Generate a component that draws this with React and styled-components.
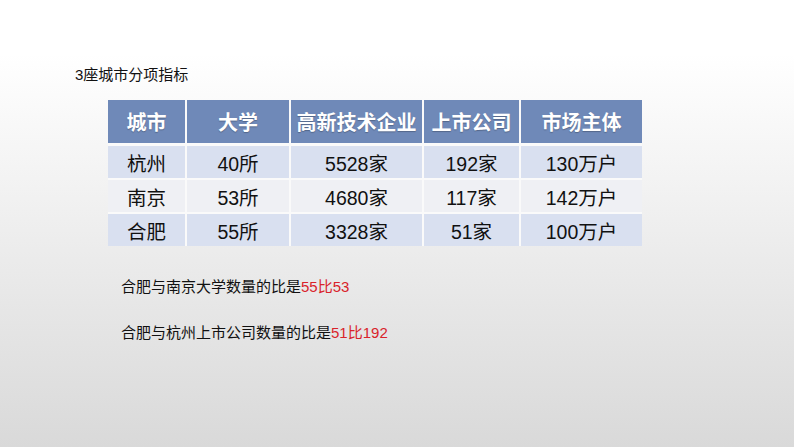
import React from "react";
import styled, { createGlobalStyle } from "styled-components";

const GlobalStyle = createGlobalStyle`
  html, body {
    margin: 0;
    padding: 0;
  }
  body {
    font-family: "Liberation Sans", "Noto Sans CJK SC", sans-serif;
  }
`;

const Slide = styled.div`
  width: 794px;
  height: 447px;
  box-sizing: border-box;
  padding: 66px 0 0 75px;
  background: linear-gradient(180deg, #ffffff 0%, #ffffff 12%, #d9d9d9 100%);
  color: #111;
`;

const Title = styled.div`
  font-size: 15px;
  line-height: 18px;
`;

const Table = styled.div`
  display: grid;
  grid-template-columns: 77px 102px 131px 95px 121px;
  grid-template-rows: 44px 32px 32px 32px;
  column-gap: 2px;
  row-gap: 2px;
  width: 534px;
  margin: 16px 0 0 33px;
  background: #fafafa;
`;

const HeadCell = styled.div`
  display: flex;
  align-items: center;
  justify-content: center;
  background: #6f89b8;
  color: #fff;
  font-weight: bold;
  font-size: 20px;
  margin-bottom: 1px;
  text-shadow: 0 1px 1px rgba(0, 0, 0, 0.25);
`;

const Cell = styled.div`
  display: flex;
  align-items: center;
  justify-content: center;
  background: ${(p) => (p.$alt ? "#eff0f4" : "#d9e0f0")};
  font-size: 19.5px;
  color: #111;
`;

const Note = styled.div`
  font-size: 15px;
  line-height: 18px;
  margin: ${(p) => p.$top}px 0 0 46px;
`;

const Red = styled.span`
  color: #d9232b;
`;

const headers = ["城市", "大学", "高新技术企业", "上市公司", "市场主体"];
const rows = [
  ["杭州", "40所", "5528家", "192家", "130万户"],
  ["南京", "53所", "4680家", "117家", "142万户"],
  ["合肥", "55所", "3328家", "51家", "100万户"],
];

export default function App() {
  return (
    <>
      <GlobalStyle />
      <Slide>
        <Title>3座城市分项指标</Title>
        <Table>
          {headers.map((h) => (
            <HeadCell key={h}>{h}</HeadCell>
          ))}
          {rows.map((r, i) =>
            r.map((c, j) => (
              <Cell key={i + "-" + j} $alt={i === 1}>
                {c}
              </Cell>
            ))
          )}
        </Table>
        <Note $top={32}>
          合肥与南京大学数量的比是<Red>55比53</Red>
        </Note>
        <Note $top={28}>
          合肥与杭州上市公司数量的比是<Red>51比192</Red>
        </Note>
      </Slide>
    </>
  );
}
